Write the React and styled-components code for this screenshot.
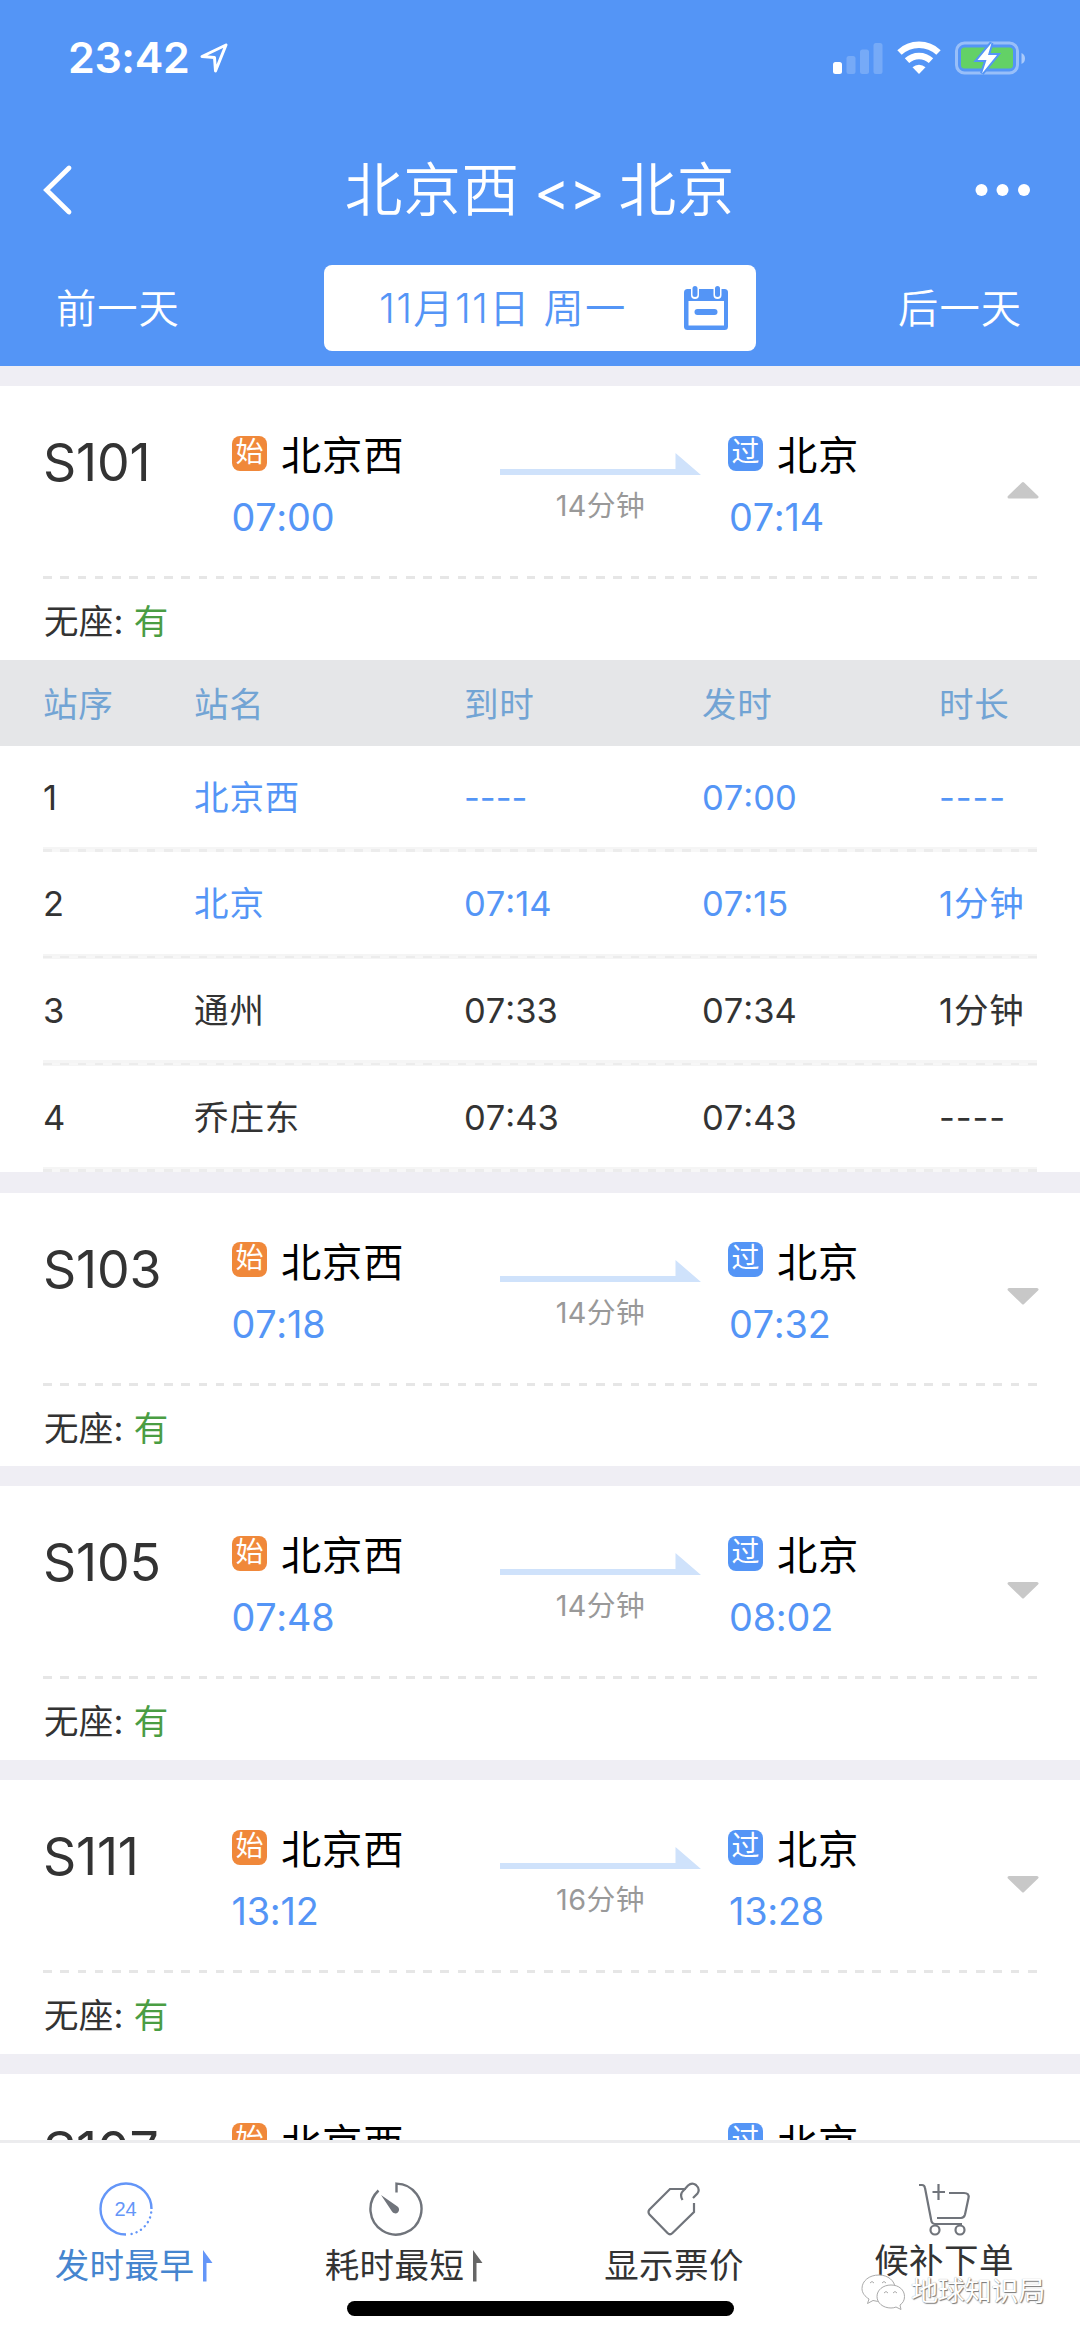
import React from "react";
import styled, { createGlobalStyle } from "styled-components";

const GlobalStyle = createGlobalStyle`
  * {
    box-sizing: border-box;
  }

  body {
    margin: 0;
    background: #efeef4;
    font-family: Inter, "Noto Sans CJK SC", sans-serif;
    font-kerning: none;
    color: #333;
  }
`;

const Screen = styled.div`
  width: 1080px;
  height: 2339px;
  display: flex;
  flex-direction: column;
  overflow: hidden;
`;

const Header = styled.header`
  flex: none;
  height: 366px;
  display: flex;
  flex-direction: column;
  background: #5495f6;
  color: #fff;
`;

const StatusBar = styled.div`
  height: 115px;
  display: flex;
  align-items: center;
  justify-content: space-between;
  padding: 0 53px 0 68px;
`;

const Clock = styled.div`
  display: flex;
  align-items: center;
  gap: 10px;
  font-size: 43px;
  font-weight: 600;
  line-height: 1;
  letter-spacing: -0.4px;
`;

const StatusIcons = styled.div`
  display: flex;
  align-items: center;
`;

const NavBar = styled.div`
  height: 150px;
  display: grid;
  grid-template-columns: 110px 1fr 110px;
  align-items: center;
`;

const NavButton = styled.button`
  display: flex;
  justify-content: flex-start;
  padding: 0;
  border: 0;
  background: none;
`;

const Title = styled.h1`
  margin: 0;
  padding-top: 2px;
  text-align: center;
  font-size: 57.6px;
  font-weight: 350;
  line-height: 80px;
  letter-spacing: 0.8px;
  word-spacing: -3px;
`;

const Swap = styled.span`
  font-size: 54px;
  font-weight: 400;
  letter-spacing: -0.5px;
`;

const DateBar = styled.div`
  height: 86px;
  display: grid;
  grid-template-columns: 1fr 432px 1fr;
  align-items: center;
  font-size: 40.3px;
  font-weight: 350;
  letter-spacing: 1px;
`;

const DayLink = styled.span`
  padding: 0 ${p => (p.$right ? "58px" : "0")} 6px ${p => (p.$right ? "0" : "56px")};
  text-align: ${p => (p.$right ? "right" : "left")};
`;

const DateBox = styled.div`
  height: 86px;
  display: flex;
  align-items: center;
  justify-content: space-between;
  padding: 0 28px 0 55px;
  border-radius: 8px;
  background: #fff;
  color: #5495f6;
`;

const DateText = styled.span`
  padding-bottom: 5px;
  letter-spacing: 1.3px;
`;

const List = styled.main`
  flex: none;
  height: 1774px;
  display: flex;
  flex-direction: column;
  gap: 20.2px;
  padding-top: 20.2px;
  overflow: hidden;
`;

const Card = styled.section`
  flex: none;
  background: #fff;
`;

const Summary = styled.div`
  height: 190px;
  display: grid;
  grid-template-columns: 188px 268px 228px 1fr 32px;
  padding: 0 41px 0 44px;
`;

const TrainNo = styled.div`
  padding-top: 44px;
  margin-left: -1px;
  font-size: 51.8px;
  line-height: 64px;
  letter-spacing: -0.2px;
`;

const Stop = styled.div`
  display: flex;
  flex-direction: column;
  padding-top: 45px;
`;

const StopName = styled.div`
  display: flex;
  align-items: center;
  height: 48px;
  gap: 14px;
  font-size: 40.3px;
  letter-spacing: 0.8px;
  color: #000;
`;

const StationText = styled.span`
  padding-bottom: 5px;
`;

const Badge = styled.span`
  width: 35px;
  height: 35px;
  margin-bottom: 4px;
  border-radius: 8px;
  background: ${p => (p.$kind === "始" ? "#f0883a" : "#5495f6")};
  color: #fff;
  font-size: 28px;
  line-height: 33px;
  text-align: center;
  letter-spacing: 0;
`;

const StopTime = styled.div`
  margin-top: 16px;
  margin-left: ${p => (p.$arrival ? "1px" : "-0.5px")};
  font-size: 37.8px;
  line-height: 44px;
  letter-spacing: -0.2px;
  color: #5495f6;
`;

const Trip = styled.div`
  display: flex;
  flex-direction: column;
  align-items: center;
  width: 201px;
  padding-top: 66px;
  font-size: 28.8px;
  line-height: 34px;
  letter-spacing: 0.4px;
  color: #999;

  svg {
    flex: none;
    margin-bottom: 13px;
  }
`;

const Toggle = styled.div`
  padding-top: 94.5px;
`;

const Dashes = styled.div`
  height: 3px;
  margin: 0 43px;
  background: repeating-linear-gradient(
    to right,
    #e6e6e6 0 8.64px,
    #fff 8.64px 17.28px
  );
`;

const Seats = styled.div`
  height: 80.5px;
  padding: 0 44px;
  font-size: 34.5px;
  line-height: 86px;
  letter-spacing: 0.3px;

  em {
    font-style: normal;
    color: #4a9d43;
  }
`;

const StopTable = styled.div`
  display: flex;
  flex-direction: column;
`;

const TableRow = styled.div`
  display: grid;
  grid-template-columns: 151px 270px 238px 237px 1fr;
  padding-left: 43px;
  font-size: 34.5px;
  color: ${p => (p.$active ? "#5495f6" : "#333")};

  span:first-child {
    color: #333;
  }
`;

const TableHead = styled(TableRow)`
  height: 86px;
  line-height: 89px;
  background: #e5e6e8;
  letter-spacing: 0.8px;

  span,
  span:first-child {
    color: #72a4d4;
  }
`;

const TableBody = styled(TableRow)`
  height: 101.4px;
  line-height: 104px;

  span:nth-child(2),
  span:last-child {
    letter-spacing: 0.9px;
  }
`;

const RowRule = styled.div`
  height: 5.3px;
  margin: 0 43px;
  background: #f5f5f5;
  padding-top: 2.3px;

  &::after {
    content: "";
    display: block;
    height: 2.4px;
    background: repeating-linear-gradient(
      to right,
      #ececec 0 8.64px,
      #f7f7f7 8.64px 17.28px
    );
  }
`;

const TabBar = styled.nav`
  position: relative;
  flex: none;
  height: 199px;
  display: grid;
  grid-template-columns: repeat(4, 1fr);
  border-top: 3px solid #ececee;
  background: #fff;
`;

const Tab = styled.div`
  display: flex;
  flex-direction: column;
  align-items: center;
  padding-top: 38px;
  font-size: 34.5px;
  letter-spacing: 0.4px;
  color: ${p => (p.$active ? "#4585cf" : "#333")};

  > svg {
    margin-right: ${p => (p.$sortable ? 18 : 2)}px;
  }
`;

const TabLabel = styled.div`
  display: flex;
  align-items: center;
  gap: 8px;
  margin-top: ${p => (p.$raised ? 2 : 7)}px;
  margin-right: 2px;
  line-height: 44px;
`;

const HomeIndicator = styled.div`
  position: absolute;
  left: 347px;
  top: 158px;
  width: 387px;
  height: 15px;
  border-radius: 8px;
  background: #000;
`;

const Watermark = styled.div`
  position: absolute;
  left: 861px;
  top: 130px;
  display: flex;
  align-items: center;
  gap: 5px;
  font-size: 27px;
  line-height: 38px;
  letter-spacing: -0.2px;
  color: #fff;
  text-shadow: 1px 1px 1px #777, 0 0 1px #999;
`;

const trains = [
  {
    no: "S101",
    depart: "07:00",
    arrive: "07:14",
    duration: "14分钟",
    stops: [
      ["1", "北京西", "----", "07:00", "----", true],
      ["2", "北京", "07:14", "07:15", "1分钟", true],
      ["3", "通州", "07:33", "07:34", "1分钟", false],
      ["4", "乔庄东", "07:43", "07:43", "----", false]
    ]
  },
  { no: "S103", depart: "07:18", arrive: "07:32", duration: "14分钟" },
  { no: "S105", depart: "07:48", arrive: "08:02", duration: "14分钟" },
  { no: "S111", depart: "13:12", arrive: "13:28", duration: "16分钟" },
  { no: "S107" }
];

const LocationIcon = () => (
  <svg width="30" height="32" viewBox="0 0 30 32" fill="none">
    <path
      d="M27 3 L3 14.5 L15.5 15.5 L16.5 29 Z"
      stroke="#fff"
      strokeWidth="3"
      strokeLinejoin="round"
    />
  </svg>
);

const StatusGlyphs = () => (
  <svg width="194" height="36" viewBox="0 0 194 36" fill="none">
    <rect x="0" y="22" width="9" height="12" rx="2.5" fill="#fff" />
    <g fill="#fff" opacity="0.2">
      <rect x="13.5" y="16" width="9" height="18" rx="2.5" />
      <rect x="27" y="9.5" width="9" height="24.5" rx="2.5" />
      <rect x="40.5" y="3" width="9" height="31" rx="2.5" />
    </g>
    <g stroke="#fff" strokeWidth="6.4">
      <path d="M66.5 12.5 A28.5 28.5 0 0 1 105.5 12.5" />
      <path d="M74 20.7 A17.5 17.5 0 0 1 98 20.7" />
    </g>
    <path d="M79.5 27.3 A9.5 9.5 0 0 1 92.5 27.3 L86 34 Z" fill="#fff" />
    <rect
      x="123.5"
      y="3"
      width="61"
      height="30"
      rx="8"
      stroke="#fff"
      strokeOpacity="0.4"
      strokeWidth="3"
    />
    <path d="M188.5 13 Q192 14.5 192 18.5 Q192 22.5 188.5 24 Z" fill="#fff" fillOpacity="0.5" />
    <rect x="128" y="7.5" width="52" height="21" rx="3.5" fill="#63d166" />
    <path
      d="M158.5 3 L144.5 20 H153.5 L149 33.5 L164 15 H155 Z"
      fill="#fff"
      stroke="#5495f6"
      strokeWidth="4"
      paintOrder="stroke"
    />
  </svg>
);

const BackIcon = () => (
  <svg width="80" height="56" viewBox="0 0 80 56" fill="none">
    <path d="M69 6 L46.5 28 L69 50" stroke="#fff" strokeWidth="4.8" strokeLinecap="round" />
  </svg>
);

const MoreIcon = () => (
  <svg width="64" height="20" viewBox="0 0 64 20" fill="#fff">
    <circle cx="11.5" cy="10" r="6" />
    <circle cx="32.5" cy="10" r="6" />
    <circle cx="54" cy="10" r="6" />
  </svg>
);

const CalendarIcon = () => (
  <svg width="44" height="44" viewBox="0 0 44 44" fill="none">
    <rect x="0" y="3" width="44" height="41" rx="3.5" fill="#5495f6" />
    <rect x="4.5" y="15" width="35.5" height="24.5" fill="#fff" />
    <rect x="7" y="-2" width="8" height="15" rx="4" fill="#fff" />
    <rect x="29.5" y="-2" width="8" height="15" rx="4" fill="#fff" />
    <rect x="8.5" y="0" width="5" height="11" rx="2.5" fill="#5495f6" />
    <rect x="31" y="0" width="5" height="11" rx="2.5" fill="#5495f6" />
    <rect x="10.5" y="23" width="23" height="6" rx="3" fill="#5495f6" />
  </svg>
);

const ArrowIcon = () => (
  <svg width="202" height="24" viewBox="0 0 202 24" fill="#cfe2fb">
    <path d="M0 17 H175.5 V1 L201 23 H0 Z" />
  </svg>
);

const Caret = ({ up }) => (
  <svg width="32" height="19" viewBox="0 0 32 19">
    <path
      d={up ? "M2 16 L16 2.5 L30 16 Z" : "M2 2.5 L16 16 L30 2.5 Z"}
      fill="#c8c8c8"
      stroke="#c8c8c8"
      strokeWidth="3"
      strokeLinejoin="round"
    />
  </svg>
);

const SortArrow = ({ color }) => (
  <svg width="11" height="32" viewBox="0 0 11 32" fill={color}>
    <path d="M1 0 L10.5 13 H4.5 V31.5 H1 Z" />
  </svg>
);

const ClockIcon = () => (
  <svg width="56" height="56" viewBox="0 0 56 56" fill="none">
    <g stroke="#6496f8" strokeWidth="2.4">
      <path d="M53.5 28 A25.5 25.5 0 1 0 28 53.5" />
      <path
        d="M53.2 31.5 A25.5 25.5 0 0 1 30 53.5"
        strokeDasharray="0.1 5"
        strokeLinecap="round"
      />
    </g>
    <text
      x="27.5"
      y="35"
      fill="#6496f8"
      fontFamily="Liberation Sans"
      fontSize="20"
      textAnchor="middle"
      letterSpacing="0"
    >
      24
    </text>
  </svg>
);

const TimerIcon = () => (
  <svg width="56" height="56" viewBox="0 0 56 56" fill="none">
    <path
      d="M28.5 11.5 V2.6 A25.5 25.5 0 1 1 10.5 9.5"
      stroke="#70747b"
      strokeWidth="2.4"
    />
    <path d="M13 14 L29.5 25.5 A3.8 3.8 0 1 1 24 30.5 Z" fill="#70747b" />
  </svg>
);

const TagIcon = () => (
  <svg width="56" height="56" viewBox="0 0 56 56" fill="none">
    <path
      d="M40 8 H24 L3.5 28.5 Q1.5 31 3.5 33.5 L21.5 52 Q24 54.5 26.5 52 L48 31 V22 M36.5 19 Q33 13 38 9 L42 4.5 Q46 1 50 4 Q54.5 8 51.5 12.5 L47 17"
      stroke="#70747b"
      strokeWidth="2.2"
    />
  </svg>
);

const CartIcon = () => (
  <svg width="56" height="56" viewBox="0 0 56 56" fill="none">
    <g stroke="#70747b" strokeWidth="2.2">
      <path d="M3 4 H6 Q8.5 4 9 7 L15 38 Q15.5 43 19 43 H46" />
      <path d="M33 12 H48 Q53.5 12 52.5 17 L49 33.5 Q48 37 45 37 H21" />
      <path d="M16.5 11 H29 M22.5 3 V19" />
      <circle cx="19" cy="49" r="4.5" fill="#fff" />
      <circle cx="44" cy="49" r="4.5" fill="#fff" />
    </g>
  </svg>
);

const WechatIcon = () => (
  <svg width="45" height="38" viewBox="0 0 45 38" fill="#fff" stroke="#aaa" strokeWidth="1">
    <path d="M18 2 C8 2 1 8 1 15.5 C1 20 4 23.5 8 26 L6.5 30.5 L12 27.5 Q17 29 20 28 C28 28 34 22 34 15 C34 8 27 2 18 2 Z" />
    <path d="M30 12 C22 12 16 17 16 23.5 C16 30 22 35 30 35 Q33 35 35 34 L40 36.5 L39 32 Q43.5 29 43.5 23.5 C43.5 17 38 12 30 12 Z" />
    <path d="M9 10 q2 -3 4 0 M21 10 q2 -3 4 0 M23 20 q2 -3 4 0 M32 20 q2 -3 4 0" fill="none" />
  </svg>
);

const TrainCard = ({ train }) => (
  <Card>
    <Summary>
      <TrainNo>{train.no}</TrainNo>
      <Stop>
        <StopName>
          <Badge $kind="始">始</Badge>
          <StationText>北京西</StationText>
        </StopName>
        <StopTime>{train.depart}</StopTime>
      </Stop>
      <Trip>
        <ArrowIcon />
        {train.duration}
      </Trip>
      <Stop>
        <StopName>
          <Badge $kind="过">过</Badge>
          <StationText>北京</StationText>
        </StopName>
        <StopTime $arrival>{train.arrive}</StopTime>
      </Stop>
      <Toggle>
        <Caret up={!!train.stops} />
      </Toggle>
    </Summary>
    {train.depart && (
      <>
        <Dashes />
        <Seats>
          无座: <em>有</em>
        </Seats>
      </>
    )}
    {train.stops && (
      <StopTable>
        <TableHead>
          <span>站序</span>
          <span>站名</span>
          <span>到时</span>
          <span>发时</span>
          <span>时长</span>
        </TableHead>
        {train.stops.map(([index, name, arrive, depart, stay, active]) => (
          <React.Fragment key={index}>
            <TableBody $active={active}>
              <span>{index}</span>
              <span>{name}</span>
              <span>{arrive}</span>
              <span>{depart}</span>
              <span>{stay}</span>
            </TableBody>
            <RowRule />
          </React.Fragment>
        ))}
      </StopTable>
    )}
  </Card>
);

const App = () => (
  <Screen>
    <GlobalStyle />
    <Header>
      <StatusBar>
        <Clock>
          23:42
          <LocationIcon />
        </Clock>
        <StatusIcons>
          <StatusGlyphs />
        </StatusIcons>
      </StatusBar>
      <NavBar>
        <NavButton>
          <BackIcon />
        </NavButton>
        <Title>
          北京西 <Swap>&lt;&gt;</Swap> 北京
        </Title>
        <NavButton>
          <MoreIcon />
        </NavButton>
      </NavBar>
      <DateBar>
        <DayLink>前一天</DayLink>
        <DateBox>
          <DateText>11月11日 周一</DateText>
          <CalendarIcon />
        </DateBox>
        <DayLink $right>后一天</DayLink>
      </DateBar>
    </Header>
    <List>
      {trains.map(train => (
        <TrainCard key={train.no} train={train} />
      ))}
    </List>
    <TabBar>
      <Tab $active $sortable>
        <ClockIcon />
        <TabLabel>
          发时最早
          <SortArrow color="#6496f8" />
        </TabLabel>
      </Tab>
      <Tab $sortable>
        <TimerIcon />
        <TabLabel>
          耗时最短
          <SortArrow color="#666" />
        </TabLabel>
      </Tab>
      <Tab>
        <TagIcon />
        <TabLabel>显示票价</TabLabel>
      </Tab>
      <Tab>
        <CartIcon />
        <TabLabel $raised>候补下单</TabLabel>
      </Tab>
      <HomeIndicator />
      <Watermark>
        <WechatIcon />
        地球知识局
      </Watermark>
    </TabBar>
  </Screen>
);

export default App;
